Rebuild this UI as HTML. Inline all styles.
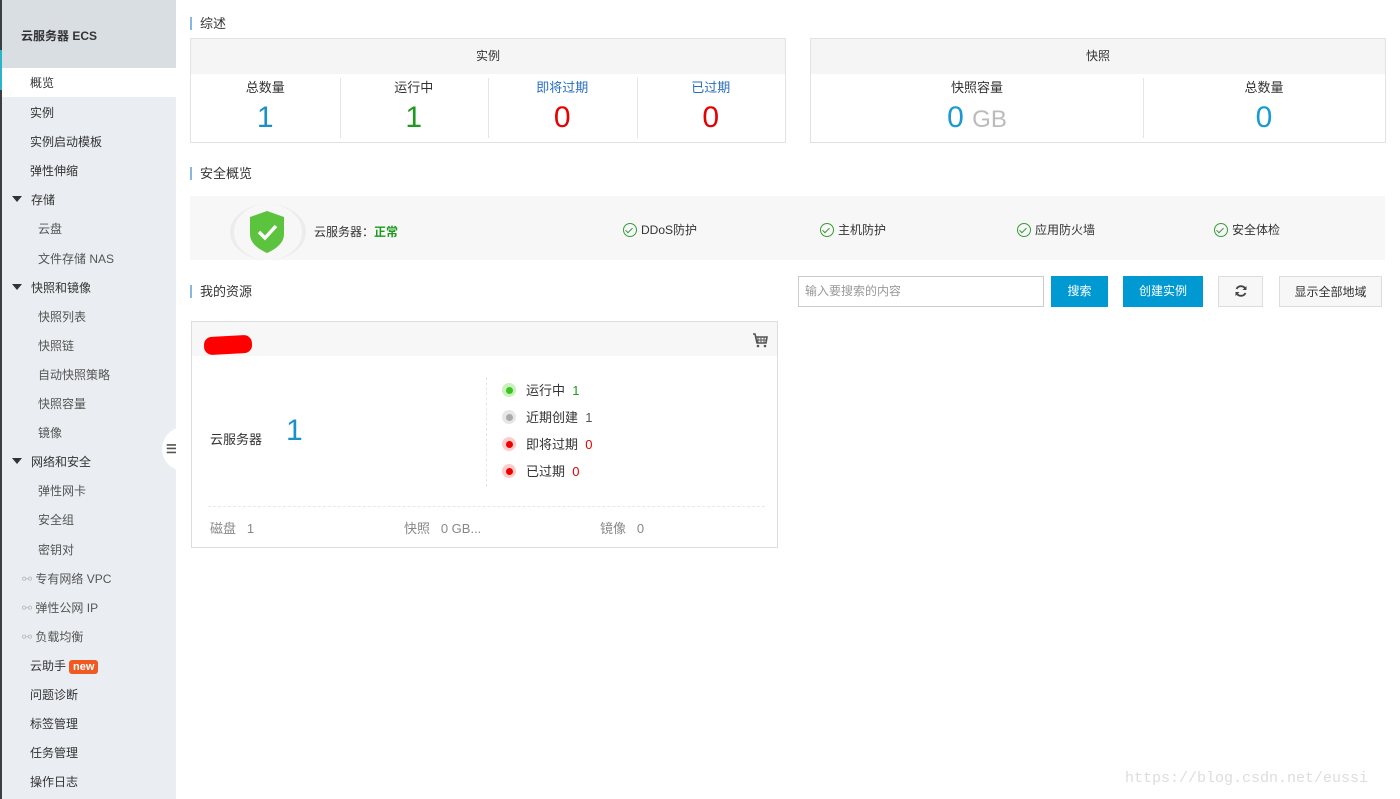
<!DOCTYPE html>
<html><head><meta charset="utf-8"><style>
*{margin:0;padding:0;box-sizing:border-box}
body{width:1400px;height:799px;overflow:hidden;background:#fff;font-family:"Liberation Sans","Noto Sans CJK SC",sans-serif;font-size:12px;color:#333;position:relative}
.sb{position:absolute;left:0;top:0;width:176px;height:799px;background:#eaedf1;border-left:2px solid #3a3f44}
.sbh{height:68px;background:#d9dee3;padding:27px 0 0 19px;font-size:12px;font-weight:bold;color:#333}
.acc{position:absolute;left:-2px;top:50px;width:2px;height:40px;background:#2bb3c9}
.it{height:29.1px;line-height:33px;padding-left:28px;color:#333}
.it.a{background:#fff;line-height:31px}
.it.s{padding-left:36px;color:#555}
.it.g{padding-left:10px}
.it.g:before{content:"";display:inline-block;border:5px solid transparent;border-top:6px solid #333;border-bottom:0;margin-right:9px;vertical-align:2px}
.it.l{padding-left:20px;color:#555}
.new{display:inline-block;background:#f05a22;color:#fff;font-weight:bold;font-size:11px;line-height:14px;padding:0 4px;border-radius:3px;margin-left:3px}
.h{position:absolute;left:190px;font-size:13px;border-left:2px solid #88b7e0;padding-left:8px;line-height:13px;color:#333}
.box{position:absolute;border:1px solid #e2e2e2;top:38px;height:105px}
.bh{height:35px;background:#f5f5f5;text-align:center;line-height:35px;font-size:12px}
.cols{display:flex;height:68px}
.col{flex:1;text-align:center;padding-top:4px;position:relative}
.col+.col:before{content:"";position:absolute;left:0;top:4px;height:60px;border-left:1px solid #e5e5e5}
.lbl{font-size:13px;line-height:20px;color:#333}
.num{font-size:30px;line-height:40px;font-weight:300}
.sec{position:absolute;left:190px;top:196px;width:1195px;height:64px;background:#f7f7f7}
.chk{position:absolute;top:27px;font-size:12px;color:#333;line-height:14px}
.chk i{display:inline-block;width:14px;height:14px;border:1.3px solid #3a9a3a;border-radius:50%;vertical-align:-3px;margin-right:4px;position:relative}
.chk i:after{content:"";position:absolute;left:3px;top:1.5px;width:3px;height:6px;border:solid #3a9a3a;border-width:0 1.3px 1.3px 0;transform:rotate(45deg)}
.btn{position:absolute;top:276px;height:31px;line-height:31px;text-align:center;font-size:12px}
.card{position:absolute;left:191px;top:321px;width:587px;height:227px;border:1px solid #ddd}
.ch{height:34px;background:#f7f7f7}
.dot{display:inline-block;width:14px;height:14px;border-radius:50%;vertical-align:-2px;margin-right:10px;position:relative}
.dot b{position:absolute;left:3.5px;top:3.5px;width:7px;height:7px;border-radius:50%}
.st{position:absolute;left:310px;font-size:13px;line-height:16px}
.ft{position:absolute;top:196px;font-size:13px;color:#888}
</style></head><body>
<div class="sb"><div class="acc"></div>
<div class="sbh">云服务器 ECS</div>
<div class="it a">概览</div><div class="it">实例</div><div class="it">实例启动模板</div><div class="it">弹性伸缩</div>
<div class="it g">存储</div><div class="it s">云盘</div><div class="it s">文件存储 NAS</div>
<div class="it g">快照和镜像</div><div class="it s">快照列表</div><div class="it s">快照链</div><div class="it s">自动快照策略</div><div class="it s">快照容量</div><div class="it s">镜像</div>
<div class="it g">网络和安全</div><div class="it s">弹性网卡</div><div class="it s">安全组</div><div class="it s">密钥对</div>
<div class="it l"><span style="color:#bbb">⚯</span> 专有网络 VPC</div><div class="it l"><span style="color:#bbb">⚯</span> 弹性公网 IP</div><div class="it l"><span style="color:#bbb">⚯</span> 负载均衡</div>
<div class="it">云助手<span class="new">new</span></div><div class="it">问题诊断</div><div class="it">标签管理</div><div class="it">任务管理</div><div class="it">操作日志</div>
</div>
<div style="position:absolute;left:162px;top:427px;width:22px;height:44px;background:#fff;border-radius:22px 0 0 22px"></div>
<div style="position:absolute;left:166px;top:442px;font-size:12px;font-weight:bold;color:#555">☰</div>

<div class="h" style="top:17px">综述</div>
<div class="box" style="left:190px;width:596px"><div class="bh">实例</div><div class="cols">
<div class="col"><div class="lbl">总数量</div><div class="num" style="color:#1a8fc9">1</div></div>
<div class="col"><div class="lbl">运行中</div><div class="num" style="color:#1e9a1e">1</div></div>
<div class="col"><div class="lbl" style="color:#2a6fc0">即将过期</div><div class="num" style="color:#e60000">0</div></div>
<div class="col"><div class="lbl" style="color:#2a6fc0">已过期</div><div class="num" style="color:#e60000">0</div></div>
</div></div>
<div class="box" style="left:810px;width:576px"><div class="bh">快照</div><div class="cols">
<div class="col" style="flex:0 0 332px"><div class="lbl">快照容量</div><div class="num" style="color:#1a9ad0">0 <span style="color:#bbb;font-size:24px">GB</span></div></div>
<div class="col"><div class="lbl">总数量</div><div class="num" style="color:#1a9ad0">0</div></div>
</div></div>

<div class="h" style="top:167px">安全概览</div>
<div class="sec">
<div style="position:absolute;left:40px;top:8px;width:76px;height:56px;border-radius:50%;border-left:4px solid #ececec;border-right:4px solid #ececec"></div>
<svg style="position:absolute;left:58px;top:14px" width="38" height="44" viewBox="0 0 38 44"><path d="M19 1 L36 7 V24 C36 33 28 39 19 43 C10 39 2 33 2 24 V7 Z" fill="#5cc33e"/><path d="M11 22 L17 28 L28 16" stroke="#fff" stroke-width="3.5" fill="none"/></svg>
<div style="position:absolute;left:124px;top:27px;font-size:12px">云服务器：<b style="color:#1e9a1e">正常</b></div>
<div class="chk" style="left:433px"><i></i>DDoS防护</div>
<div class="chk" style="left:630px"><i></i>主机防护</div>
<div class="chk" style="left:827px"><i></i>应用防火墙</div>
<div class="chk" style="left:1024px"><i></i>安全体检</div>
</div>

<div class="h" style="top:285px">我的资源</div>
<div class="btn" style="left:798px;width:246px;border:1px solid #ccc;text-align:left;padding-left:6px;color:#999;line-height:29px">输入要搜索的内容</div>
<div class="btn" style="left:1051px;width:57px;background:#0099d2;color:#fff">搜索</div>
<div class="btn" style="left:1123px;width:80px;background:#0099d2;color:#fff">创建实例</div>
<div class="btn" style="left:1218px;width:45px;border:1px solid #ddd;background:#f7f7f7">
<svg width="14" height="14" viewBox="0 0 14 14" style="vertical-align:-2px"><path d="M11.5 5A5 5 0 0 0 2.5 5M2.5 9a5 5 0 0 0 9 0" stroke="#444" stroke-width="1.8" fill="none"/><path d="M12.5 2v4h-4z" fill="#444"/><path d="M1.5 12V8h4z" fill="#444"/></svg></div>
<div class="btn" style="left:1279px;width:103px;border:1px solid #ddd;background:#f7f7f7">显示全部地域</div>

<div class="card"><div class="ch">
<div style="position:absolute;left:12px;top:14px;width:48px;height:18px;background:#f00;border-radius:8px;transform:rotate(-3deg)"></div>
<svg style="position:absolute;left:560px;top:10px" width="16" height="16" viewBox="0 0 16 16"><path d="M1 2h2l2 9h9l1-6H4" stroke="#555" stroke-width="1.6" fill="none"/><path d="M6 5v6M9 5v6M12 5v6M4 8h11" stroke="#555" stroke-width="1"/><circle cx="6" cy="14" r="1.3" fill="#555"/><circle cx="13" cy="14" r="1.3" fill="#555"/></svg>
</div>
<div style="position:absolute;left:18px;top:107px;font-size:13px">云服务器</div>
<div style="position:absolute;left:94px;top:92px;font-size:30px;color:#1a8fc9;font-weight:300">1</div>
<div style="position:absolute;left:294px;top:55px;height:110px;border-left:1px dashed #e5e5e5"></div>
<div class="st" style="top:61px"><span class="dot" style="background:#c9f0bd"><b style="background:#3cc41e"></b></span>运行中 &nbsp;<span style="color:#1e9a1e">1</span></div>
<div class="st" style="top:88px"><span class="dot" style="background:#e6e6e6"><b style="background:#aaa"></b></span>近期创建 &nbsp;<span style="color:#555">1</span></div>
<div class="st" style="top:115px"><span class="dot" style="background:#fcc"><b style="background:#e00"></b></span>即将过期 &nbsp;<span style="color:#e60000">0</span></div>
<div class="st" style="top:142px"><span class="dot" style="background:#fcc"><b style="background:#e00"></b></span>已过期 &nbsp;<span style="color:#e60000">0</span></div>
<div style="position:absolute;left:16px;right:12px;top:184px;border-top:1px dashed #e8e8e8"></div>
<div class="ft" style="left:18px">磁盘 &nbsp;&nbsp;1</div>
<div class="ft" style="left:212px">快照 &nbsp;&nbsp;0 GB...</div>
<div class="ft" style="left:408px">镜像 &nbsp;&nbsp;0</div>
</div>
<div style="position:absolute;left:1125px;top:770px;font-family:'Liberation Mono',monospace;font-size:15px;color:#ddd">https://blog.csdn.net/eussi</div>
</body></html>
